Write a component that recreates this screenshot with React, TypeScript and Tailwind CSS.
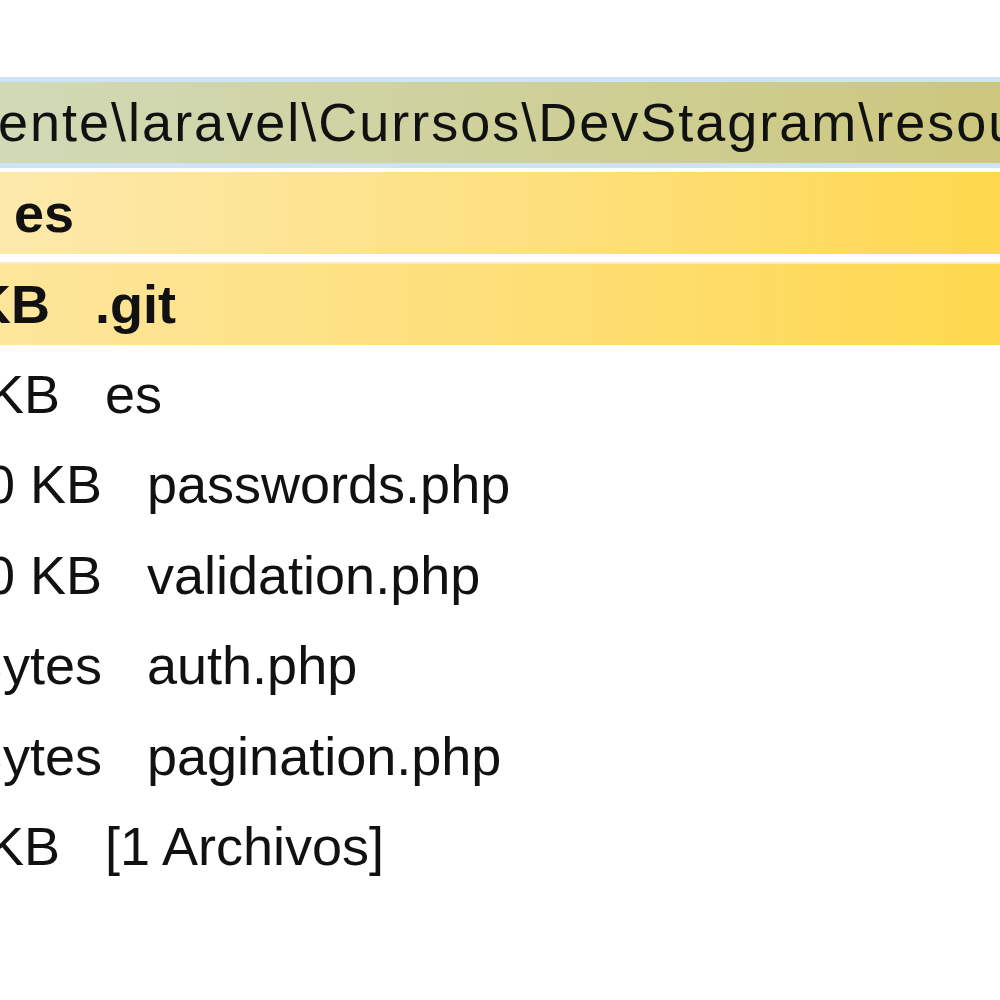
const rows = [
  { size: "4,0 KB", name: "es", indent: "pl-[10px]" },
  { size: "4,0 KB", name: "passwords.php", indent: "pl-[52px]" },
  { size: "8,0 KB", name: "validation.php", indent: "pl-[52px]" },
  { size: "725 Bytes", name: "auth.php", indent: "pl-[52px]" },
  { size: "420 Bytes", name: "pagination.php", indent: "pl-[52px]" },
  { size: "4,0 KB", name: "[1 Archivos]", indent: "pl-[10px]" },
];

function Row({ size, name, indent }: (typeof rows)[number]) {
  return (
    <div className={`flex h-[90.5px] items-center gap-[45px] leading-[90.5px] whitespace-nowrap ${indent}`}>
      <span className="w-[300px] shrink-0 text-right">{size}</span>
      <span>{name}</span>
    </div>
  );
}

export default function App() {
  return (
    <div
      className="w-[1000px] h-[1000px] bg-white overflow-hidden text-[54px] text-[#111]"
      style={{ fontFamily: '"Liberation Sans", Arial, sans-serif' }}
    >
      <div className="h-[77px]" />

      {/* path header */}
      <div className="h-[90.5px] border-y-[5px] border-[#cde4f7] bg-linear-to-r from-[#d1dab7] to-[#cdc77d] leading-[80px] whitespace-nowrap overflow-hidden tracking-[2px]">
        <span className="ml-[-2px]">ente\laravel\Currsos\DevStagram\resources\lang</span>
      </div>

      {/* selected rows */}
      <div className="h-[90.5px] py-[4px]">
        <div className="h-full bg-linear-to-r from-[#fde9ab] to-[#fed84c] leading-[82px] font-bold pl-[14px]">
          es
        </div>
      </div>
      <div className="h-[90.5px] py-[4px]">
        <div className="flex h-full items-center gap-[45px] ml-[-250px] border-t-2 border-[#fcecc0] bg-linear-to-r from-[#fde9ab] to-[#fed84c] leading-[80px] font-bold whitespace-nowrap">
          <span className="w-[300px] shrink-0 text-right">8,0 KB</span>
          <span>.git</span>
        </div>
      </div>

      {/* children */}
      <div className="ml-[-250px]">
        {rows.map((r) => (
          <Row key={r.name} {...r} />
        ))}
      </div>
    </div>
  );
}
